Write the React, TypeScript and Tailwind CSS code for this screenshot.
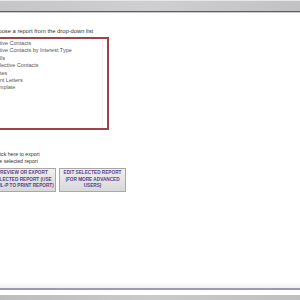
const reports = [
  "Active Contacts",
  "Active Contacts by Interest Type",
  "Calls",
  "Selective Contacts",
  "Notes",
  "Sent Letters",
  "Template",
]

export default function App() {
  return (
    <div
      className="w-[300px] h-[300px] overflow-hidden bg-white flex flex-col"
      style={{ fontFamily: '"Liberation Sans", Arial, sans-serif' }}
    >
      {/* top toolbar */}
      <div className="h-[13px] shrink-0 flex flex-col">
        <div className="h-px bg-[#e6e6e6]" />
        <div className="h-[10px] bg-gradient-to-r from-[#c6c6c6] via-[#cfcfcf] to-[#c2c2c2]" />
        <div className="h-px bg-[#5e5e6a]" />
        <div className="h-px bg-[#c8c8d8]" />
      </div>

      {/* content */}
      <div className="flex-1 ml-[-9px] pt-[15px]">
        <div className="text-[5.8px] leading-[7px] text-[#333]">Choose a report from the drop-down list</div>

        <div className="mt-[2px] w-[120px] h-[93px] border-2 border-[#9c4448] ml-[-2px] pl-[2px] pt-[1px] flex">
          <div className="flex-1 flex flex-col">
            {reports.map((r) => (
              <div key={r} className="text-[5.5px] leading-[7.4px] text-[#555] whitespace-nowrap">
                {r}
              </div>
            ))}
          </div>
          <div className="w-[5px] border-l border-[#f0f0f0]" />
        </div>

        <div className="mt-[21px] ml-[4px] text-[5.2px] leading-[7px] text-[#333]">
          <div>Click here to export</div>
          <div>the selected report</div>
        </div>

        <div className="mt-[3px] ml-[-2px] flex gap-[3px]">
          <button className="w-[67px] h-[24px] border border-[#a8a8a8] bg-gradient-to-b from-[#efefef] to-[#d8d8d8] text-[4.7px] leading-[6.6px] font-bold text-[#5c3f8e] text-center">
            PREVIEW OR EXPORT
            <br />
            SELECTED REPORT (USE
            <br />
            CTRL-P TO PRINT REPORT)
          </button>
          <button className="w-[67px] h-[24px] border border-[#a8a8a8] bg-gradient-to-b from-[#efefef] to-[#d8d8d8] text-[4.7px] leading-[6.6px] font-bold text-[#5c3f8e] text-center">
            EDIT SELECTED REPORT
            <br />
            (FOR MORE ADVANCED
            <br />
            USERS)
          </button>
        </div>
      </div>

      {/* bottom status bar */}
      <div className="h-[18px] shrink-0 flex flex-col">
        <div className="h-[6px] bg-gradient-to-b from-white to-[#f1f1f1]" />
        <div className="h-[2px] bg-[#9a9ab6]" />
        <div className="h-[5px] bg-white" />
        <div className="h-[5px] bg-gradient-to-r from-[#bdbdbd] via-[#cacaca] to-[#c0c0c0]" />
      </div>
    </div>
  )
}
